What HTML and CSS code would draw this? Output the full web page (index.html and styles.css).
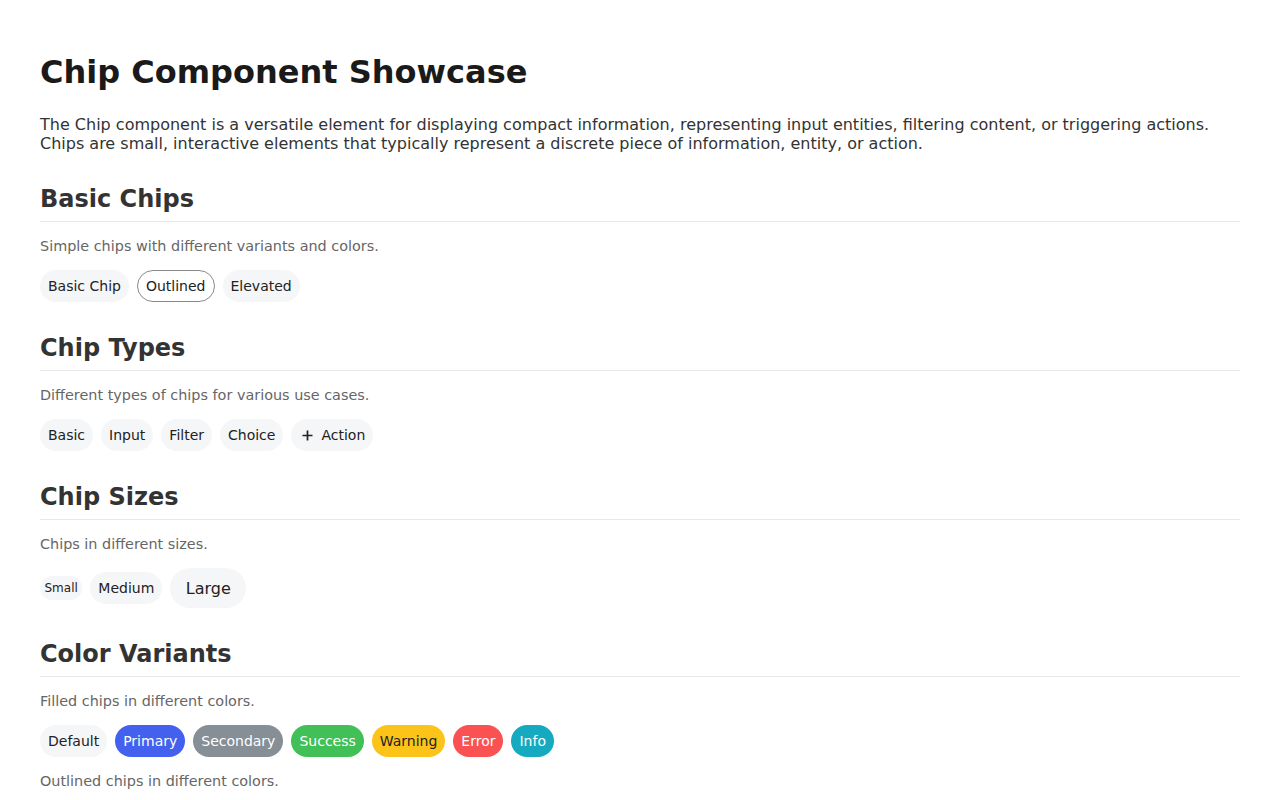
FILE: index.html
```html
<!DOCTYPE html>
<html lang="en">
<head>
<meta charset="utf-8">
<title>Chip Component Showcase</title>
<link rel="stylesheet" href="styles.css">
</head>
<body>
<main class="page">
  <h1 class="title">Chip Component Showcase</h1>
  <p class="intro">The Chip component is a versatile element for displaying compact information, representing input entities, filtering content, or triggering actions. Chips are small, interactive elements that typically represent a discrete piece of information, entity, or action.</p>

  <section class="section">
    <h2 class="section-title">Basic Chips</h2>
    <p class="desc">Simple chips with different variants and colors.</p>
    <div class="chip-row">
      <span class="chip">Basic Chip</span>
      <span class="chip chip-outlined">Outlined</span>
      <span class="chip chip-elevated">Elevated</span>
    </div>
  </section>

  <section class="section">
    <h2 class="section-title">Chip Types</h2>
    <p class="desc">Different types of chips for various use cases.</p>
    <div class="chip-row">
      <span class="chip">Basic</span>
      <span class="chip">Input</span>
      <span class="chip">Filter</span>
      <span class="chip">Choice</span>
      <span class="chip chip-action"><svg class="chip-icon" viewBox="0 0 11 11" width="11" height="11" aria-hidden="true"><path d="M5.5 0.5v10M0.5 5.5h10" stroke="#222" stroke-width="1.7" fill="none"/></svg>Action</span>
    </div>
  </section>

  <section class="section">
    <h2 class="section-title">Chip Sizes</h2>
    <p class="desc">Chips in different sizes.</p>
    <div class="chip-row">
      <span class="chip chip-sm">Small</span>
      <span class="chip">Medium</span>
      <span class="chip chip-lg">Large</span>
    </div>
  </section>

  <section class="section">
    <h2 class="section-title">Color Variants</h2>
    <p class="desc">Filled chips in different colors.</p>
    <div class="chip-row">
      <span class="chip">Default</span>
      <span class="chip c-primary">Primary</span>
      <span class="chip c-secondary">Secondary</span>
      <span class="chip c-success">Success</span>
      <span class="chip c-warning">Warning</span>
      <span class="chip c-error">Error</span>
      <span class="chip c-info">Info</span>
    </div>
    <p class="desc desc-spaced">Outlined chips in different colors.</p>
    <div class="chip-row">
      <span class="chip chip-outlined">Default</span>
      <span class="chip chip-outlined o-primary">Primary</span>
      <span class="chip chip-outlined o-secondary">Secondary</span>
      <span class="chip chip-outlined o-success">Success</span>
      <span class="chip chip-outlined o-warning">Warning</span>
      <span class="chip chip-outlined o-error">Error</span>
      <span class="chip chip-outlined o-info">Info</span>
    </div>
  </section>
</main>
</body>
</html>
```

FILE: styles.css
```css
* { box-sizing: border-box; }

body {
  margin: 0;
  background: #ffffff;
  font-family: "DejaVu Sans", Verdana, sans-serif;
  color: #333333;
}

.page {
  max-width: 1200px;
  margin: 0 auto;
  padding: 53px 0 40px;
}

.title {
  margin: 0 0 24px;
  font-size: 32px;
  font-weight: 700;
  color: #1a1a1a;
}

.intro {
  margin: 0 0 32px;
  font-size: 16px;
  line-height: 19px;
  color: #333333;
}

.section {
  margin-bottom: 32px;
}

.section-title {
  margin: 0 0 16px;
  padding-bottom: 8px;
  border-bottom: 1px solid #e8e8e8;
  font-size: 24px;
  font-weight: 700;
  line-height: 28px;
  color: #333333;
}

.desc {
  margin: 0 0 15px;
  font-size: 14.4px;
  line-height: 17px;
  color: #666666;
}

.desc-spaced {
  margin-top: 16px;
}

.chip-row {
  display: flex;
  flex-wrap: wrap;
  align-items: center;
  gap: 8px;
}

.chip {
  display: inline-flex;
  align-items: center;
  height: 32px;
  padding: 0 8px;
  border-radius: 16px;
  background: #f5f6f8;
  font-size: 14px;
  color: #222222;
  white-space: nowrap;
}

.chip-outlined {
  background: transparent;
  border: 1px solid #8a8a8a;
}

.chip-elevated {
  background: #f5f6f8;
}

.chip-action {
  padding-left: 11px;
}

.chip-icon {
  display: block;
  margin-right: 8px;
}

.chip-sm {
  height: 24px;
  padding: 0 4.5px;
  border-radius: 12px;
  font-size: 12px;
}

.chip-lg {
  height: 40px;
  padding: 0 15.5px;
  border-radius: 20px;
  font-size: 16px;
}

.c-primary { background: #4361ee; color: #ffffff; }
.c-secondary { background: #868e96; color: #ffffff; }
.c-success { background: #40c057; color: #ffffff; }
.c-warning { background: #fcc419; color: #222222; }
.c-error { background: #fa5252; color: #ffffff; }
.c-info { background: #15aabf; color: #ffffff; }

.o-primary { border-color: #4361ee; color: #4361ee; }
.o-secondary { border-color: #868e96; color: #868e96; }
.o-success { border-color: #40c057; color: #40c057; }
.o-warning { border-color: #fcc419; color: #c99700; }
.o-error { border-color: #fa5252; color: #fa5252; }
.o-info { border-color: #15aabf; color: #15aabf; }
```
